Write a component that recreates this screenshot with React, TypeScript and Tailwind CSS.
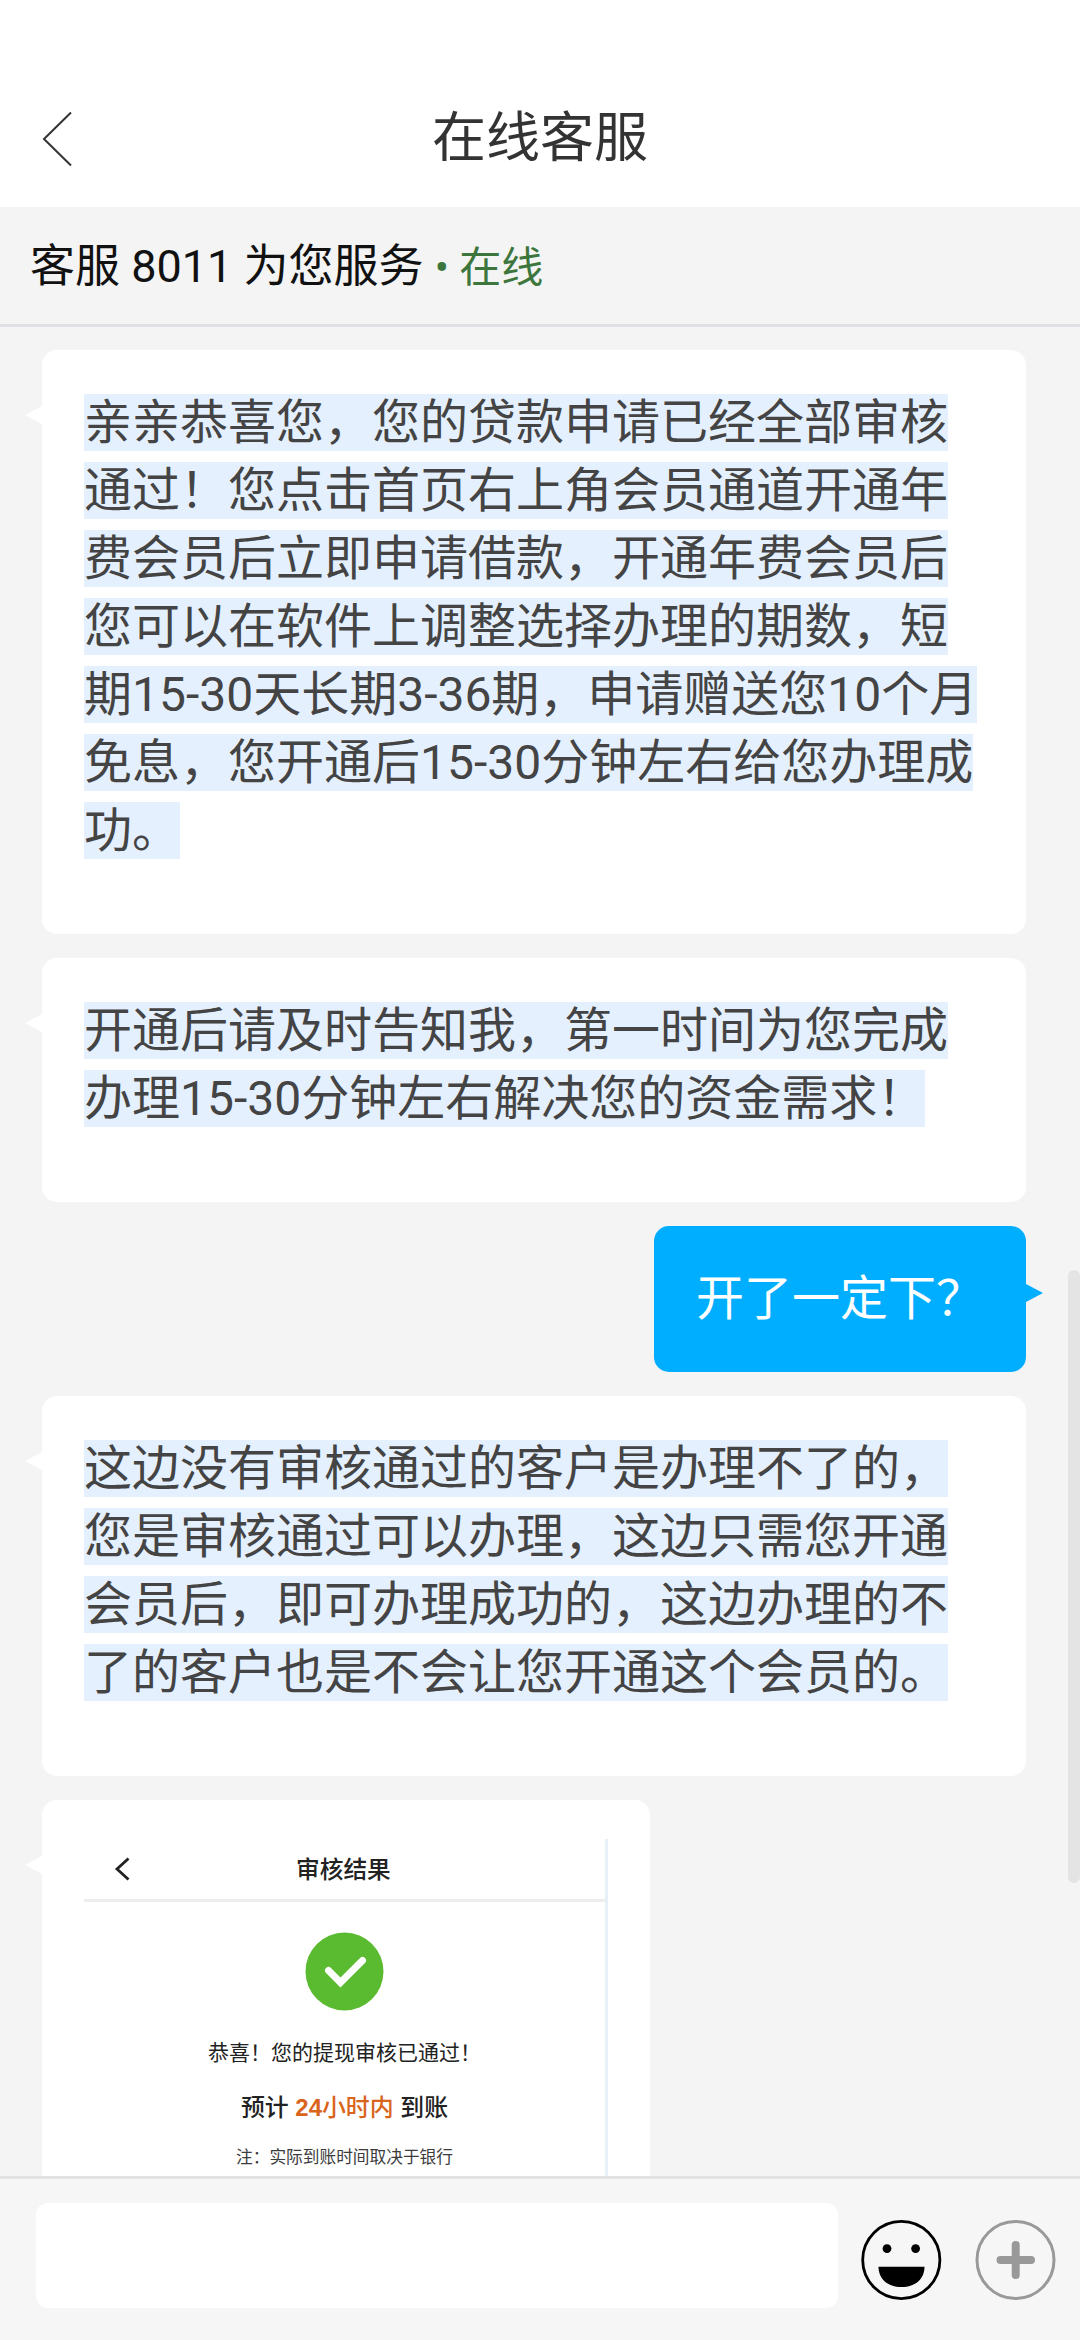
import { ReactNode } from "react";

interface BubbleProps {
  side: "left" | "right";
  children: ReactNode;
}

interface Message {
  id: number;
  side: "left" | "right";
  text: string;
}

const messages: Message[] = [
  {
    id: 1,
    side: "left",
    text: "亲亲恭喜您，您的贷款申请已经全部审核通过！您点击首页右上角会员通道开通年费会员后立即申请借款，开通年费会员后您可以在软件上调整选择办理的期数，短期15-30天长期3-36期，申请赠送您10个月免息，您开通后15-30分钟左右给您办理成功。",
  },
  {
    id: 2,
    side: "left",
    text: "开通后请及时告知我，第一时间为您完成办理15-30分钟左右解决您的资金需求！",
  },
  { id: 3, side: "right", text: "开了一定下？" },
  {
    id: 4,
    side: "left",
    text: "这边没有审核通过的客户是办理不了的，您是审核通过可以办理，这边只需您开通会员后，即可办理成功的，这边办理的不了的客户也是不会让您开通这个会员的。",
  },
];

const Bubble = ({ side, children }: BubbleProps) => {
  const isLeft = side === "left";
  return (
    <div
      className={`relative w-fit rounded-[15px] px-[42px] py-[39px] ${
        isLeft ? "bg-white text-[#444]" : "self-end bg-[#00aeff] text-white"
      }`}
    >
      <svg
        className={`absolute h-[18px] w-[17px] ${isLeft ? "top-[56px] -left-[17px]" : "top-[58px] -right-[17px]"}`}
        viewBox="0 0 17 18"
      >
        {isLeft ? (
          <path d="M17 0L0 9l17 9z" fill="#fff" />
        ) : (
          <path d="M0 0l17 9-17 9z" fill="#00aeff" />
        )}
      </svg>
      {children}
    </div>
  );
};

const ReviewCard = () => (
  <div className="flex h-[420px] w-[524px] flex-col items-center border-r-[3px] border-[#e8eff7] font-['Liberation_Sans','Noto_Sans_CJK_SC',sans-serif] text-[#222]">
    <div className="flex h-[63px] w-full items-center border-b-[3px] border-[#ededed] pl-[30px]">
      <svg className="h-6 w-4" viewBox="0 0 16 24" fill="none" stroke="#222" strokeWidth="2.8">
        <path d="M14.5 1.5L3 12l11.5 10.5" />
      </svg>
      <span className="mt-[3px] ml-[166px] text-[23.7px] leading-none font-medium">审核结果</span>
    </div>
    <svg className="mt-[30px] h-[79px] w-[79px]" viewBox="0 0 79 79" fill="none">
      <circle cx="39.5" cy="39.5" r="39" fill="#5bbb30" />
      <path d="M23.5 38.5L35.5 50.5L57.5 28.5" stroke="#fff" strokeWidth="7" strokeLinecap="round" />
    </svg>
    <p className="mt-[26px] text-[21px] leading-[32px]">恭喜！您的提现审核已通过！</p>
    <p className="mt-[21px] text-[23.9px] leading-[36px] font-medium whitespace-pre">
      预计 <span className="text-[#d9641c]"><b>24</b>小时内</span> 到账
    </p>
    <p className="mt-5 text-[16.7px] leading-6 text-[#3c3c3c]">注：实际到账时间取决于银行</p>
  </div>
);

function App() {
  return (
    <div className="relative flex h-[2340px] w-[1080px] flex-col overflow-hidden bg-[#f4f4f4] font-['Roboto','Noto_Sans_CJK_SC',sans-serif]">
      <header className="relative flex h-[207px] shrink-0 justify-center bg-white pt-[99px]">
        <svg
          className="absolute top-[111px] left-[42px] h-[56px] w-[30px]"
          viewBox="0 0 30 56"
          fill="none"
          stroke="#333"
          strokeWidth="2"
        >
          <path d="M29 1.5L2 28l27 26.5" />
        </svg>
        <h1 className="text-[54px] leading-[80px] text-[#333]">在线客服</h1>
      </header>

      <div className="h-[120px] shrink-0 border-b-[3px] border-[#dfe1e7] pt-[28px] pl-[30px] text-[45px] leading-[64px] whitespace-pre text-[#111]">
        客服 8011 为您服务 <span className="text-[42px] text-[#3c763d]">• 在线</span>
      </div>

      <main className="flex min-h-0 flex-1 flex-col gap-6 overflow-hidden pt-[23px] pr-[54px] pl-[42px]">
        {messages.map((message) => (
          <Bubble key={message.id} side={message.side}>
            {message.side === "left" ? (
              <p className="mb-[30px] w-[900px] text-[48px] leading-[68px]">
                <span className="bg-[#e5f0ff]">{message.text}</span>
              </p>
            ) : (
              <p className="text-[48px] leading-[68px]">{message.text}</p>
            )}
          </Bubble>
        ))}
        <Bubble side="left">
          <ReviewCard />
        </Bubble>
      </main>

      <footer className="flex h-[164px] shrink-0 border-t-[3px] border-[#e2e2e2] bg-[#f6f6f6] pt-6 pl-9">
        <input className="h-[105px] w-[802px] rounded-xl bg-white px-6 text-[48px] outline-none" />
        <svg className="mt-[17px] ml-[23px] h-[80px] w-[81px]" viewBox="0 0 81 80">
          <circle cx="40.3" cy="40" r="38.6" fill="none" stroke="#000" strokeWidth="2.8" />
          <circle cx="26" cy="28.6" r="4.4" />
          <circle cx="54.6" cy="28.6" r="4.4" />
          <path d="M17.5 46.7h46c0 12-9 20.3-23 20.3s-23-8.3-23-20.3z" />
        </svg>
        <svg className="mt-[17px] ml-[33px] h-[80px] w-[81px]" viewBox="0 0 81 80" fill="none" stroke="#999">
          <circle cx="40.5" cy="40" r="38.5" strokeWidth="3" />
          <path d="M25.5 40h30.5M40.7 25v30" strokeWidth="8" strokeLinecap="round" />
        </svg>
      </footer>

      {/* scrollbar */}
      <div className="absolute top-[1270px] right-0 h-[613px] w-3 rounded-full bg-[#e4e4e4]" />
    </div>
  );
}

export default App;
